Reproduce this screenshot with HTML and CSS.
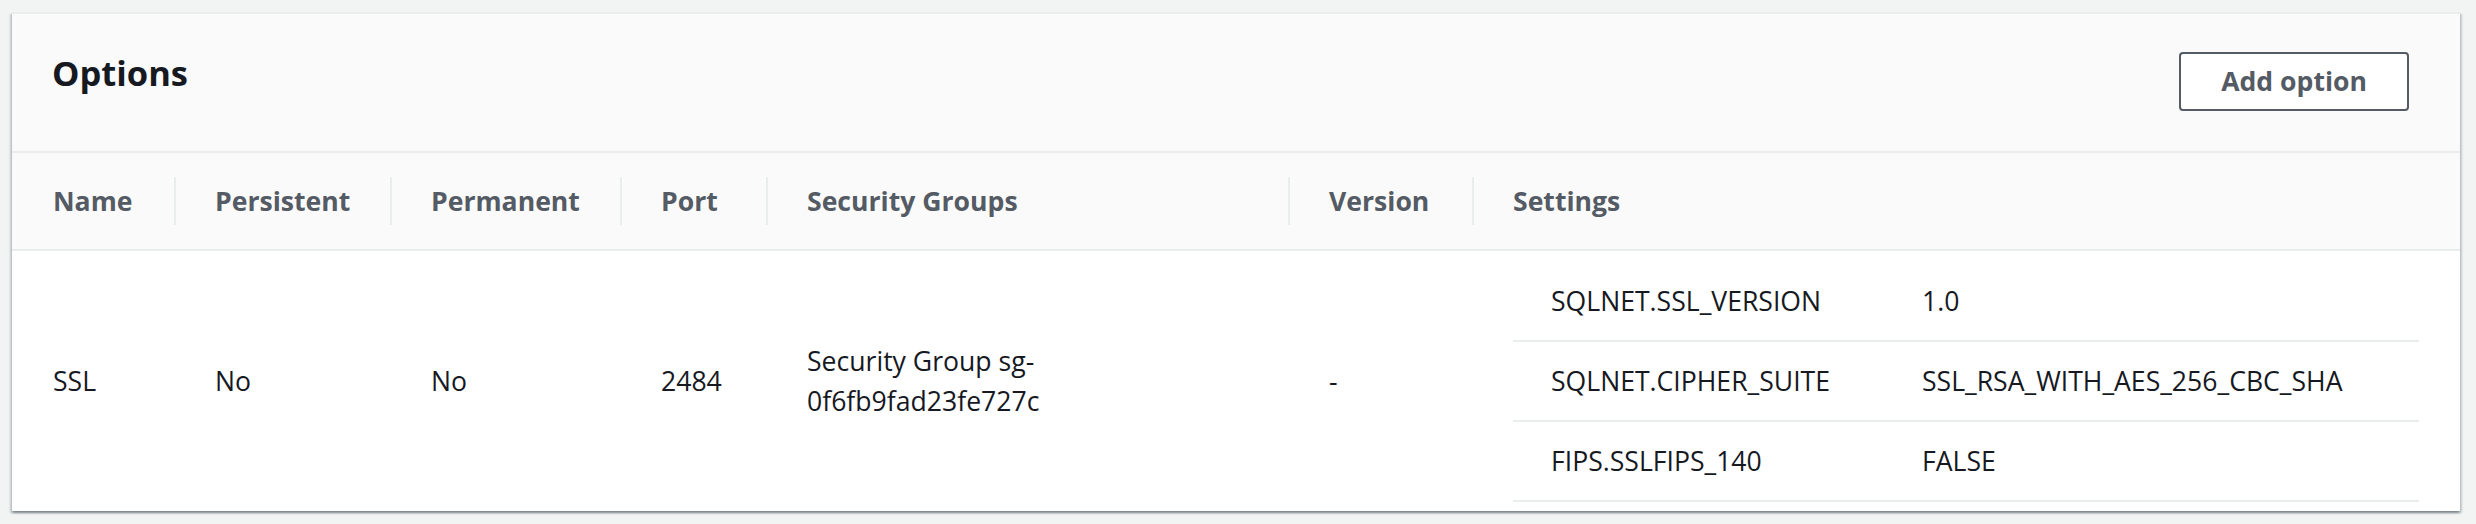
FILE: index.html
```html
<!DOCTYPE html>
<html lang="en">
<head>
<meta charset="utf-8">
<title>Options</title>
<link rel="stylesheet" href="styles.css">
</head>
<body>
<div class="card">
  <div class="card-header">
    <h2 class="title">Options</h2>
    <button class="btn" type="button">Add option</button>
  </div>
  <div class="table">
    <div class="thead">
      <div class="th">Name</div>
      <div class="th">Persistent</div>
      <div class="th">Permanent</div>
      <div class="th">Port</div>
      <div class="th">Security Groups</div>
      <div class="th">Version</div>
      <div class="th">Settings</div>
    </div>
    <div class="trow">
      <div class="td">SSL</div>
      <div class="td">No</div>
      <div class="td">No</div>
      <div class="td">2484</div>
      <div class="td sg">Security Group sg-<wbr>0f6fb9fad23fe727c</div>
      <div class="td">-</div>
      <div class="td settings">
        <div class="kv-row"><span class="k">SQLNET.SSL_VERSION</span><span class="v">1.0</span></div>
        <div class="kv-row"><span class="k">SQLNET.CIPHER_SUITE</span><span class="v">SSL_RSA_WITH_AES_256_CBC_SHA</span></div>
        <div class="kv-row"><span class="k">FIPS.SSLFIPS_140</span><span class="v">FALSE</span></div>
      </div>
    </div>
  </div>
</div>
</body>
</html>
```

FILE: styles.css
```css
* { box-sizing: border-box; }

html, body {
  margin: 0;
  background: #f2f3f3;
}

body {
  padding: 12px 16px 0 12px;
  min-height: 524px;
  font-family: "Open Sans", "Noto Sans", sans-serif;
  color: #16191f;
}

.card {
  width: 2448px;
  background: #ffffff;
  border-top: 2px solid #eaeded;
  box-shadow: 0 2px 2px 0 rgba(0, 28, 36, 0.3),
              2px 2px 2px 0 rgba(0, 28, 36, 0.15),
              -2px 2px 2px 0 rgba(0, 28, 36, 0.15);
}

.card-header {
  height: 139px;
  display: flex;
  justify-content: space-between;
  align-items: flex-start;
  padding: 36px 51px 0 40px;
  background: #fafafa;
  border-bottom: 2px solid #eaeded;
}

.title {
  margin: 0;
  font-size: 34.5px;
  line-height: 46px;
  font-weight: 700;
  color: #16191f;
}

.btn {
  margin-top: 2px;
  height: 59px;
  padding: 0 40px;
  border: 2px solid #545b64;
  border-radius: 4px;
  background: #ffffff;
  color: #545b64;
  font-family: "Open Sans", "Noto Sans", sans-serif;
  font-size: 26.6px;
  font-weight: 700;
  line-height: 55px;
}

.thead,
.trow {
  display: grid;
  grid-template-columns: 162px 216px 230px 146px 522px 184px 1fr;
  align-items: center;
}

.thead {
  height: 98px;
  background: #fafafa;
  border-bottom: 2px solid #eaeded;
}

.th {
  height: 48px;
  display: flex;
  align-items: center;
  padding-left: 39px;
  border-left: 2px solid #eaeded;
  font-size: 26.6px;
  font-weight: 700;
  color: #545b64;
  white-space: nowrap;
}

.th:first-child {
  border-left: none;
  padding-left: 41px;
}

.trow {
  height: 260px;
  background: #ffffff;
}

.td {
  padding-left: 41px;
  padding-right: 40px;
  font-size: 26.6px;
  line-height: 40px;
  color: #16191f;
}

.td.settings {
  align-self: stretch;
  padding: 11px 41px 9px 41px;
}

.kv-row {
  display: grid;
  grid-template-columns: 371px 1fr;
  align-items: center;
  height: 80px;
  border-bottom: 2px solid #eaeded;
}

.k, .v {
  padding-left: 38px;
  white-space: nowrap;
}
```
